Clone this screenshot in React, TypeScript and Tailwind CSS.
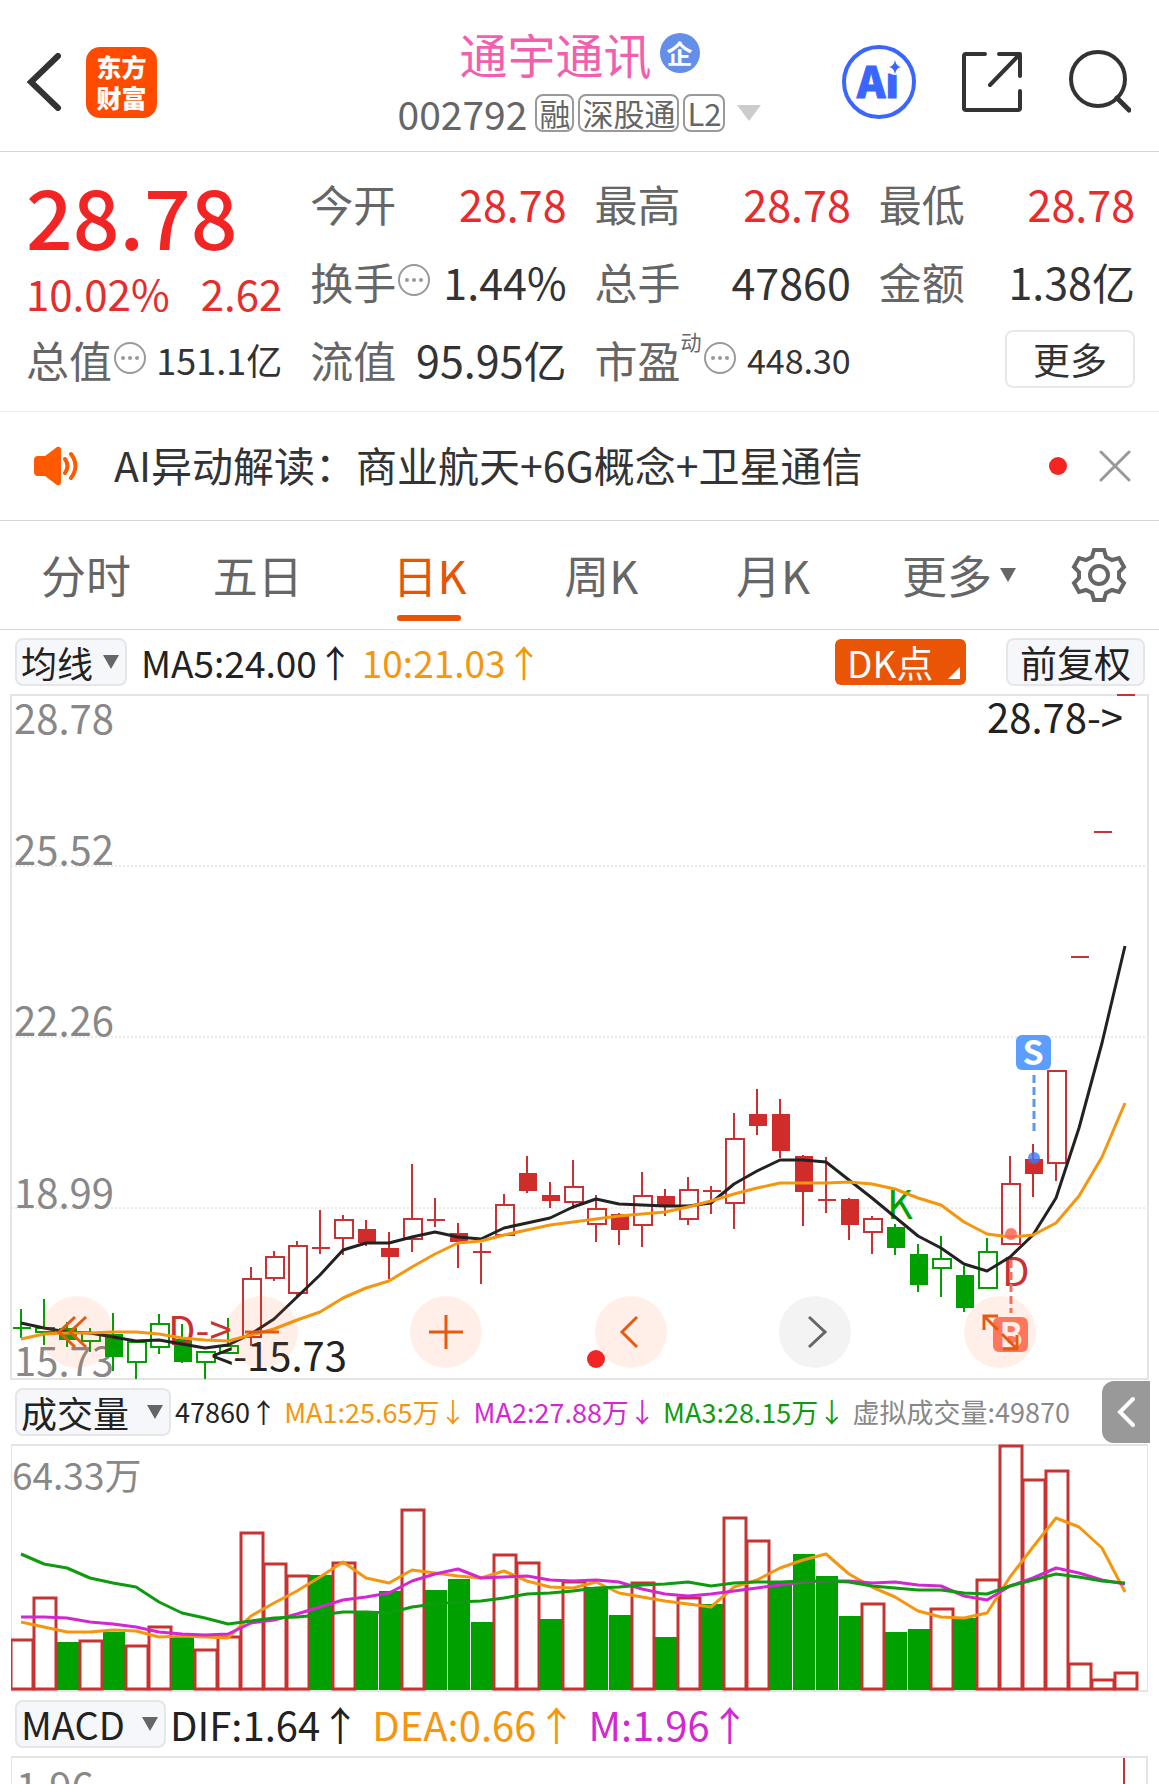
import React, { useState } from "react";

type CandleKind = "up" | "upFill" | "down" | "downFill";
type Candle = [kind: CandleKind, high: number, top: number, bottom: number, low: number];

const RED = "#c83232";
const GREEN = "#00a000";
const GRID = "#e4e4e4";

const STEP = 23;
const centerX = (i: number) => 10 + i * STEP;

const candles: Candle[] = [
  ["down", 614, 633, 633, 643],
  ["down", 604, 633, 637, 650],
  ["downFill", 627, 633, 645, 652],
  ["down", 633, 638, 646, 657],
  ["downFill", 618, 639, 662, 676],
  ["down", 646, 647, 667, 684],
  ["down", 619, 629, 652, 659],
  ["downFill", 629, 644, 667, 668],
  ["down", 656, 657, 667, 684],
  ["down", 623, 651, 658, 658],
  ["up", 572, 584, 642, 651],
  ["up", 556, 562, 583, 586],
  ["up", 546, 551, 598, 603],
  ["up", 515, 553, 553, 559],
  ["up", 520, 525, 543, 560],
  ["upFill", 525, 534, 548, 551],
  ["upFill", 537, 553, 562, 584],
  ["up", 469, 524, 544, 557],
  ["up", 503, 525, 525, 532],
  ["upFill", 528, 538, 547, 573],
  ["up", 548, 557, 557, 589],
  ["up", 499, 510, 540, 541],
  ["upFill", 461, 478, 496, 498],
  ["upFill", 487, 500, 506, 513],
  ["up", 465, 492, 507, 514],
  ["up", 500, 514, 529, 547],
  ["upFill", 518, 519, 535, 550],
  ["up", 477, 501, 530, 552],
  ["upFill", 494, 501, 510, 521],
  ["up", 482, 495, 524, 530],
  ["up", 491, 496, 496, 519],
  ["up", 418, 444, 508, 534],
  ["upFill", 394, 419, 431, 440],
  ["upFill", 404, 419, 456, 463],
  ["upFill", 460, 461, 497, 531],
  ["up", 462, 505, 505, 518],
  ["upFill", 503, 504, 530, 545],
  ["up", 521, 524, 537, 559],
  ["downFill", 529, 532, 553, 560],
  ["downFill", 549, 559, 590, 597],
  ["down", 541, 564, 573, 602],
  ["downFill", 571, 580, 613, 617],
  ["down", 543, 557, 593, 593],
  ["up", 461, 489, 549, 549],
  ["upFill", 449, 464, 479, 502],
  ["up", 375, 376, 468, 486],
  ["up", 262, 262, 262, 262],
  ["up", 137, 137, 137, 137],
  ["up", 0, 0, 0, 0],
];

const ma5 = [
  628, 633, 637, 638, 642, 646, 645, 649, 653, 650, 639, 624, 602, 580, 555, 548, 548, 542, 537, 542, 544, 533, 528,
  523, 512, 504, 509, 510, 511, 511, 508, 489, 476, 465, 465, 467, 485, 503, 522, 541, 553, 569, 576, 562, 540, 503,
  433, 348, 251,
];

const ma10 = [
  644, 639, 638, 638, 637, 637, 639, 643, 645, 646, 640, 634, 625, 617, 603, 593, 586, 572, 559, 548, 546, 540, 535,
  530, 527, 524, 521, 519, 517, 512, 506, 499, 493, 488, 488, 488, 487, 489, 494, 503, 510, 527, 539, 542, 540, 528,
  501, 462, 408,
];

// negative = falling day
const volumes = [
  194, 152, -197, 195, -187, 200, 181, -192, 204, 191, 87, 118, 130, -130, 117, -166, -146, 64, -145, -134, -177, 109,
  117, -174, 136, -142, -170, 137, -192, 152, -159, 72, 95, -138, -109, -131, -171, 158, -187, -184, 163, -173, 134, 0,
  34, 25, 218, 234, 227,
];

const volMa1 = [
  177, 182, 187, 187, 185, 186, 192, 191, 192, 193, 171, 158, 146, 132, 117, 133, 138, 125, 128, 131, 133, 126, 136,
  142, 143, 137, 148, 152, 156, 159, 162, 142, 135, 123, 115, 109, 129, 142, 152, 166, 172, 173, 168, 132, 102, 73, 82,
  103, 147,
];

const volMa2 = [
  172, 172, 173, 177, 179, 182, 187, 189, 190, 189, 178, 175, 169, 162, 155, 152, 148, 136, 129, 124, 133, 132, 131,
  135, 136, 135, 137, 144, 149, 151, 149, 146, 143, 140, 137, 136, 136, 138, 137, 140, 141, 151, 155, 141, 133, 123,
  128, 135, 139,
];

const volMa3 = [
  109, 119, 123, 133, 138, 142, 157, 168, 173, 179, 176, 173, 172, 170, 167, 167, 168, 162, 159, 157, 156, 153, 149,
  148, 146, 143, 142, 140, 139, 137, 141, 138, 137, 137, 136, 136, 137, 141, 143, 145, 145, 148, 149, 141, 135, 129,
  132, 136, 138,
];

const toPoints = (values: number[]) => values.map((y, i) => `${centerX(i)},${y}`).join(" ");

const MoreDots: React.FC = () => (
  <svg viewBox="0 0 34 38" className="h-[38px] w-[34px] shrink-0">
    <circle cx="18" cy="18" r="15" fill="none" stroke="#999" strokeWidth="2" />
    <circle cx="11" cy="18" r="2" fill="#999" />
    <circle cx="18" cy="18" r="2" fill="#999" />
    <circle cx="25" cy="18" r="2" fill="#999" />
  </svg>
);

interface QuoteItemProps {
  label: string;
  value: string;
  sup?: string;
  info?: boolean;
  valueClass?: string;
}

const QuoteItem: React.FC<QuoteItemProps> = ({ label, value, sup, info, valueClass }) => (
  <div className="flex h-[78px] items-center justify-between whitespace-nowrap">
    <div className="flex items-center text-[43px] leading-[60px] text-[#666]">
      {label}
      {sup && <span className="self-start text-[21px] leading-6">{sup}</span>}
      {info && <MoreDots />}
    </div>
    <div className={valueClass || "text-[43px] text-[#333]"}>{value}</div>
  </div>
);

interface PickerProps {
  label: string;
  options: string[];
  className: string;
}

const Picker: React.FC<PickerProps> = ({ label, options, className }) => {
  const [value, setValue] = useState<string>(options[0]);

  return (
    <div className={`relative shrink-0 ${className}`}>
      <select
        aria-label={label}
        value={value}
        onChange={(e) => setValue(e.target.value)}
        className="block h-12 w-full appearance-none rounded-lg border-2 border-[#e4e6ea] bg-[#f6f7fa] pl-1 leading-[44px] text-[#222]"
      >
        {options.map((option) => (
          <option key={option}>{option}</option>
        ))}
      </select>
      <svg viewBox="0 0 16 14" className="pointer-events-none absolute top-4 right-2 h-4 w-4">
        <path d="M0 0h16l-8 14z" fill="#666" />
      </svg>
    </div>
  );
};

const Header: React.FC = () => (
  <header className="grid grid-cols-[1fr_auto_1fr] items-center border-b border-[#d6d6d6] pt-[15px] pb-3">
    <div className="flex items-center gap-6 pl-6 pt-[10px]">
      <button type="button" aria-label="返回">
        <svg viewBox="0 0 38 58" className="h-[58px] w-[38px]" fill="none" stroke="#333" strokeWidth="6">
          <path d="M34 3L7 29l27 26" strokeLinecap="round" />
        </svg>
      </button>
      <div className="grid h-[71px] w-[71px] content-center rounded-[14px] bg-[#ff4b00] text-center text-[25px] leading-[31px] font-black text-white">
        <span>东方</span>
        <span>财富</span>
      </div>
    </div>
    <div className="flex flex-col items-center">
      <h1 className="flex items-center gap-2 pt-1 text-[48px] leading-[68px] text-[#f25fae]">
        通宇通讯
        <span className="grid h-10 w-10 place-items-center rounded-full bg-[#638fe8] text-[26px] leading-[30px] font-bold text-white">
          企
        </span>
      </h1>
      <div className="flex items-center gap-1 text-[31px] text-[#666]">
        <span className="mr-1 text-[39px] leading-[52px]">002792</span>
        <span className="rounded-lg border-2 border-[#999] px-[2px] leading-[34px]">融</span>
        <span className="rounded-lg border-2 border-[#999] px-[2px] leading-[34px]">深股通</span>
        <span className="rounded-lg border-2 border-[#999] px-[2px] leading-[34px]">L2</span>
        <svg viewBox="0 0 24 16" className="ml-2 h-4 w-6">
          <path d="M0 0h24L12 16z" fill="#ccc" />
        </svg>
      </div>
    </div>
    <div className="flex items-center justify-end gap-11 pr-7 pt-[10px]">
      <button type="button" aria-label="Ai">
        <svg viewBox="0 0 76 76" className="h-[76px] w-[76px]">
          <circle cx="38" cy="38" r="35" fill="none" stroke="#3a66ff" strokeWidth="4" />
          <text
            x="37"
            y="54"
            fontSize="43"
            fontWeight="900"
            textAnchor="middle"
            fill="#3a66ff"
            stroke="#3a66ff"
            strokeWidth="1"
          >
            Ai
          </text>
          <circle cx="54" cy="23" r="8" fill="#fff" />
          <path d="M54 16q1 6 6 7-5 1-6 7-1-6-6-7 5-1 6-7z" fill="#3a66ff" />
        </svg>
      </button>
      <button type="button" aria-label="分享">
        <svg viewBox="0 0 62 62" className="h-[62px] w-[62px]" fill="none" stroke="#333" strokeWidth="4">
          <path
            d="M24 3H5q-2 0-2 2v52q0 2 2 2h52q2 0 2-2V40M38 3h21v22M58 4L29 34"
            strokeLinecap="round"
            strokeLinejoin="round"
          />
        </svg>
      </button>
      <button type="button" aria-label="搜索">
        <svg viewBox="0 0 64 64" className="h-16 w-16" fill="none" stroke="#333" strokeWidth="4">
          <circle cx="31" cy="29" r="27" />
          <path d="M50 48l12 12" strokeWidth="5" strokeLinecap="round" />
        </svg>
      </button>
    </div>
  </header>
);

const Quote: React.FC = () => (
  <section className="grid grid-cols-4 gap-x-7 border-b border-[#ebebeb] pt-3 pr-6 pb-[13px] pl-[26px]">
    <div className="row-span-2 flex flex-col text-[#e62c2c]">
      <div className="text-[82px] leading-[102px] font-medium text-[#f22424]">28.78</div>
      <div className="flex justify-between text-[42px] leading-[54px]">
        <span>10.02%</span>
        <span>2.62</span>
      </div>
    </div>
    <QuoteItem label="今开" value="28.78" valueClass="text-[43px] text-[#e62c2c]" />
    <QuoteItem label="最高" value="28.78" valueClass="text-[43px] text-[#e62c2c]" />
    <QuoteItem label="最低" value="28.78" valueClass="text-[43px] text-[#e62c2c]" />
    <QuoteItem label="换手" value="1.44%" info />
    <QuoteItem label="总手" value="47860" />
    <QuoteItem label="金额" value="1.38亿" />
    <QuoteItem label="总值" value="151.1亿" info valueClass="text-[36px] text-[#333]" />
    <QuoteItem label="流值" value="95.95亿" />
    <QuoteItem label="市盈" value="448.30" sup="动" info valueClass="text-[34px] text-[#333]" />
    <div className="flex items-center justify-end">
      <button
        type="button"
        className="h-[58px] w-[130px] rounded-lg border-2 border-[#e8e8ea] text-[37px] leading-[50px] text-[#333]"
      >
        更多
      </button>
    </div>
  </section>
);

const Notice: React.FC = () => (
  <section className="flex h-[109px] items-center border-b border-[#d6d6d6] pr-7 pl-8">
    <svg viewBox="0 0 48 42" className="mr-[34px] h-[42px] w-12 shrink-0">
      <path d="M6 11h7L25 2q4-1 4 3v32q0 4-4 3L13 31H6q-4 0-4-4V15q0-4 4-4z" fill="#ff5a00" />
      <path d="M33 14q5 7 0 14M39 9q9 12 0 24" fill="none" stroke="#ff5a00" strokeWidth="4" strokeLinecap="round" />
    </svg>
    <p className="flex-1 truncate pb-1 text-[41px] leading-[60px] text-[#333]">
      AI异动解读：商业航天+6G概念+卫星通信
    </p>
    <span className="mr-8 h-[18px] w-[18px] rounded-full bg-[#f22424]" />
    <button type="button" aria-label="关闭">
      <svg viewBox="0 0 32 32" className="h-8 w-8" stroke="#999" strokeWidth="3" strokeLinecap="round">
        <path d="M2 2l28 28M30 2L2 30" />
      </svg>
    </button>
  </section>
);

const tabs = ["分时", "五日", "日K", "周K", "月K"];

const PeriodTabs: React.FC = () => {
  const [active, setActive] = useState<string>("日K");

  return (
    <nav className="flex h-[109px] items-stretch border-b border-[#d6d6d6] text-[45px] leading-[60px] text-[#666]">
      {tabs.map((tab) => (
        <button
          key={tab}
          type="button"
          onClick={() => setActive(tab)}
          className={`relative flex-1 ${tab === active ? "text-[#e65505]" : ""}`}
        >
          {tab}
          {tab === active && (
            <span className="absolute bottom-2 left-1/2 h-[6px] w-16 -translate-x-1/2 rounded-full bg-[#e65505]" />
          )}
        </button>
      ))}
      <button type="button" className="flex w-[180px] items-center justify-center gap-2 pl-5">
        更多
        <svg viewBox="0 0 16 14" className="h-4 w-4">
          <path d="M0 0h16l-8 14z" fill="#666" />
        </svg>
      </button>
      <button type="button" aria-label="设置" className="flex w-[120px] items-center justify-center">
        <svg viewBox="0 0 56 56" className="h-14 w-14" fill="none" stroke="#666" strokeWidth="4">
          <path d="M23 3h10l2 7 6 3 7-2 5 9-5 5v6l5 5-5 9-7-2-6 3-2 7H23l-2-7-6-3-7 2-5-9 5-5v-6l-5-5 5-9 7 2 6-3z" />
          <circle cx="28" cy="28" r="9" />
        </svg>
      </button>
    </nav>
  );
};

const CandleShape: React.FC<{ candle: Candle; index: number }> = ({ candle, index }) => {
  const [kind, high, top, bottom, low] = candle;
  const x = centerX(index);
  const color = kind.startsWith("up") ? RED : GREEN;

  if (bottom === top) {
    return <path d={`M${x - 8} ${top}h18M${x} ${high}V${low}`} stroke={color} strokeWidth="2" />;
  }
  if (kind === "upFill" || kind === "downFill") {
    return (
      <g fill={kind === "upFill" ? "#d02c2c" : GREEN}>
        <rect x={x - 8} y={top} width="18" height={bottom - top} />
        <rect x={x - 1} y={high} width="2" height={low - high} />
      </g>
    );
  }
  return (
    <g fill="none" stroke={color} strokeWidth="2">
      <rect x={x - 8} y={top} width="18" height={bottom - top} />
      <path d={`M${x} ${high}V${top}M${x} ${bottom}V${low}`} />
    </g>
  );
};

const CandleChart: React.FC = () => (
  <svg viewBox="0 -1 1137 686" className="block h-auto w-full overflow-visible">
    <g stroke="#d4d4d4" strokeWidth="1" strokeDasharray="2 2">
      <path d="M0 171H1137M0 342H1137M0 513H1137" />
    </g>
    <rect x="0" y="0" width="1137" height="684" fill="none" stroke={GRID} strokeWidth="2" />
    <g fontSize="40" fill="#888">
      <text x="3" y="39">28.78</text>
      <text x="3" y="170">25.52</text>
      <text x="3" y="341">22.26</text>
      <text x="3" y="513">18.99</text>
      <text x="3" y="681">15.73</text>
    </g>
    {candles.map((candle, i) => (
      <CandleShape key={i} candle={candle} index={i} />
    ))}
    <g fontSize="40">
      <text x="157" y="650" fill={RED}>D-&gt;</text>
      <text x="876" y="524" fill={GREEN}>K</text>
      <text x="991" y="591" fill={RED}>D</text>
      <text x="200" y="676" fill="#222">&lt;-15.73</text>
      <text x="1112" y="38" fill="#222" textAnchor="end">28.78-&gt;</text>
    </g>
    <g fill="none" strokeWidth="3" strokeLinejoin="round">
      <polyline points={toPoints(ma5)} stroke="#222" />
      <polyline points={toPoints(ma10)} stroke="#f5960f" />
    </g>
    <path d="M1023 380V437" stroke="#5b9ae8" strokeWidth="3" strokeDasharray="8 4" />
    <circle cx="1023" cy="463" r="6" fill="#3c78f0" fillOpacity="0.8" />
    <path d="M1000 565V618" stroke="#f07060" strokeWidth="3" strokeDasharray="8 4" />
    <circle cx="1000" cy="539" r="6" fill="#ff6450" fillOpacity="0.85" />
    <rect x="1005" y="340" width="35" height="35" rx="6" fill="#5b9eff" />
    <rect x="982" y="622" width="35" height="35" rx="6" fill="#ff7864" />
    <g fontSize="34" fontWeight="bold" fill="#fff" textAnchor="middle">
      <text x="1022" y="370">S</text>
      <text x="1000" y="652">B</text>
    </g>
  </svg>
);

const chartActions = [
  { name: "最早", path: "M34 21L18 36l16 15M45 21L29 36l16 15" },
  { name: "缩小", path: "M19 36h34" },
  { name: "放大", path: "M19 36h34M36 19v34" },
  { name: "向左", path: "M42 21L27 36l15 15", dot: true },
  { name: "向右", path: "M30 21l16 15-16 15", disabled: true },
  { name: "全屏", path: "M20 34V20h14M20 20l14 14M38 38l15 15M53 39v14H39" },
];

const ChartActions: React.FC = () => (
  <div className="absolute inset-x-0 bottom-3 flex justify-between pr-28 pl-[30px]">
    {chartActions.map((action) => (
      <button
        key={action.name}
        type="button"
        aria-label={action.name}
        disabled={action.disabled}
        className={`relative rounded-full ${action.disabled ? "bg-[#888]/10" : "bg-[#ff6414]/10"}`}
      >
        <svg viewBox="0 0 72 72" className="h-[72px] w-[72px]" fill="none" strokeWidth="3">
          <path d={action.path} stroke={action.disabled ? "#666" : "#e65a0f"} />
        </svg>
        {action.dot && <span className="absolute bottom-0 -left-2 h-[18px] w-[18px] rounded-full bg-[#f22424]" />}
      </button>
    ))}
  </div>
);

const VolumeChart: React.FC = () => (
  <svg viewBox="0 -1 1137 248" className="block h-auto w-full">
    <rect x="0" y="0" width="1137" height="246" fill="none" stroke={GRID} strokeWidth="2" />
    <text x="1" y="45" fontSize="37" fill="#888">64.33万</text>
    {volumes.map((v, i) => {
      const top = Math.abs(v);
      const x = centerX(i) - 10;
      return v < 0 ? (
        <rect key={i} x={x} y={top} width="22" height={245 - top} fill={GREEN} />
      ) : (
        <rect key={i} x={x} y={top + 1} width="22" height={243 - top} fill="none" stroke={RED} strokeWidth="3" />
      );
    })}
    <g fill="none" strokeWidth="3" strokeLinejoin="round">
      <polyline points={toPoints(volMa1)} stroke="#f5960f" />
      <polyline points={toPoints(volMa2)} stroke="#d228d2" />
      <polyline points={toPoints(volMa3)} stroke="#0f9b0f" />
    </g>
  </svg>
);

const App: React.FC = () => {
  return (
    <div className="flex h-screen flex-col overflow-hidden bg-white font-['Noto_Sans_CJK_SC',sans-serif]">
      <Header />
      <Quote />
      <Notice />
      <PeriodTabs />
      <div className="flex h-16 shrink-0 items-center pr-[14px] pl-[15px] text-[37px] leading-[52px] whitespace-nowrap text-[#222]">
        <Picker label="主图指标" options={["均线", "BOLL"]} className="mr-[14px] w-28 text-[36px]" />
        <span>MA5:24.00↑</span>
        <span className="ml-2 text-[#f5960f]">10:21.03↑</span>
        <button
          type="button"
          className="relative ml-auto h-[46px] w-[131px] rounded-md bg-[#e95504] pl-3 text-left leading-[44px] text-white"
        >
          DK点
          <svg viewBox="0 0 12 12" className="absolute right-[6px] bottom-[6px] h-3 w-3">
            <path d="M12 0v12H0z" fill="#fff" />
          </svg>
        </button>
        <button
          type="button"
          className="ml-10 h-12 w-[139px] rounded-lg border-2 border-[#e4e6ea] bg-[#f6f7fa] leading-[42px]"
        >
          前复权
        </button>
      </div>
      <div className="relative mx-[11px] shrink-0">
        <CandleChart />
        <ChartActions />
      </div>
      <div className="mr-[9px] ml-[11px] flex h-16 shrink-0 items-center pl-1 text-[27px] leading-[52px] whitespace-nowrap text-[#222]">
        <Picker label="副图指标一" options={["成交量", "成交额"]} className="mr-1 w-[156px] text-[36px]" />
        <div className="flex flex-1 justify-between pr-8">
          <span>47860↑</span>
          <span className="text-[#f5960f]">MA1:25.65万↓</span>
          <span className="text-[#d228d2]">MA2:27.88万↓</span>
          <span className="text-[#0f9b0f]">MA3:28.15万↓</span>
          <span className="text-[#888]">虚拟成交量:49870</span>
        </div>
        <button
          type="button"
          aria-label="展开"
          className="flex h-[62px] w-12 items-center justify-center rounded-l-xl bg-[#999]"
        >
          <svg viewBox="0 0 20 32" className="h-8 w-5" fill="none" stroke="#fff" strokeWidth="4">
            <path d="M17 3L4 16l13 13" strokeLinecap="round" />
          </svg>
        </button>
      </div>
      <div className="mx-[11px] shrink-0">
        <VolumeChart />
      </div>
      <div className="mx-[11px] flex h-16 shrink-0 items-center pl-1 text-[40px] leading-[52px] whitespace-nowrap text-[#222]">
        <Picker label="副图指标二" options={["MACD", "KDJ"]} className="mr-1 w-[151px] text-[38px]" />
        <span>DIF:1.64↑</span>
        <span className="ml-3 text-[#f5960f]">DEA:0.66↑</span>
        <span className="ml-3 text-[#d228d2]">M:1.96↑</span>
      </div>
      <div className="mx-[11px] flex min-h-0 flex-1 items-start justify-between overflow-hidden border-t-2 border-r-2 border-l border-[#e4e4e4] pr-[21px] pl-1">
        <span className="text-[40px] leading-[54px] text-[#888]">1.96</span>
        <span className="h-full w-[2px] bg-[#c83232]" />
      </div>
    </div>
  );
};

export default App;
